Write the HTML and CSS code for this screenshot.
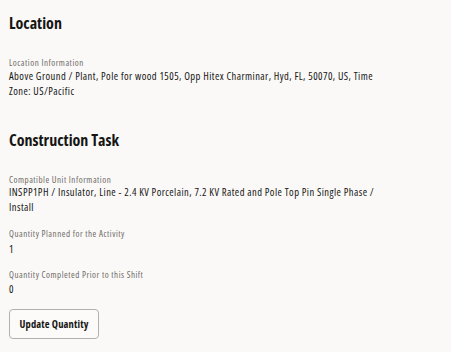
FILE: index.html
```html
<!DOCTYPE html>
<html lang="en">
<head>
    <meta charset="UTF-8">
    <meta name="viewport" content="width=device-width, initial-scale=1.0">
    <title>Construction Task</title>
    <link rel="stylesheet" href="styles.css">
</head>
<body>
    <div class="page">
        <!-- Location -->
        <div class="section">
            <h2 class="section-title">Location</h2>
            <div class="field">
                <div class="label">Location Information</div>
                <div class="value">Above Ground / Plant, Pole for wood 1505, Opp Hitex Charminar, Hyd, FL, 50070, US, Time Zone: US/Pacific</div>
            </div>
        </div>
        <!-- Construction Task -->
        <div class="section">
            <h2 class="section-title">Construction Task</h2>
            <div class="field">
                <div class="label">Compatible Unit Information</div>
                <div class="value">INSPP1PH / Insulator, Line - 2.4 KV Porcelain, 7.2 KV Rated and Pole Top Pin Single Phase / Install</div>
            </div>
            <div class="field">
                <div class="label">Quantity Planned for the Activity</div>
                <div class="value num">1</div>
            </div>
            <div class="field">
                <div class="label">Quantity Completed Prior to this Shift</div>
                <div class="value num">0</div>
            </div>
            <button class="btn">Update Quantity</button>
        </div>
    </div>
</body>
</html>
```
FILE: styles.css
```css
body {
    margin: 0;
    background-color: #faf9f8;
    color: #161513;
    font-family: 'Open Sans', sans-serif;
    font-stretch: 75%;
}
.page {
    padding: 13px 57px 0 9px;
}
.section {
    margin-bottom: 30.7px;
}
.section:last-child {
    margin-bottom: 0;
}
.section-title {
    margin: 0 0 24px;
    font-size: 16px;
    font-weight: bold;
    line-height: 20px;
}
.field {
    margin-bottom: 12px;
}
.label {
    font-size: 9px;
    line-height: 12px;
    letter-spacing: 0.5px;
    color: #6f6b67;
}
.value {
    margin-top: -0.5px;
    padding-bottom: 0.8px;
    font-size: 10.5px;
    line-height: 15px;
    letter-spacing: 0.44px;
}
.value.num {
    margin-top: 1.5px;
    padding-bottom: 0;
}
.btn {
    display: block;
    width: 90px;
    height: 30px;
    margin-top: 8px;
    padding: 0;
    font-family: 'Open Sans', sans-serif;
    font-stretch: 75%;
    font-size: 10.5px;
    font-weight: bold;
    letter-spacing: 0.15px;
    color: #161513;
    background-color: #fcfbfa;
    border: 1px solid #b3afab;
    border-radius: 4px;
    cursor: pointer;
}
```
